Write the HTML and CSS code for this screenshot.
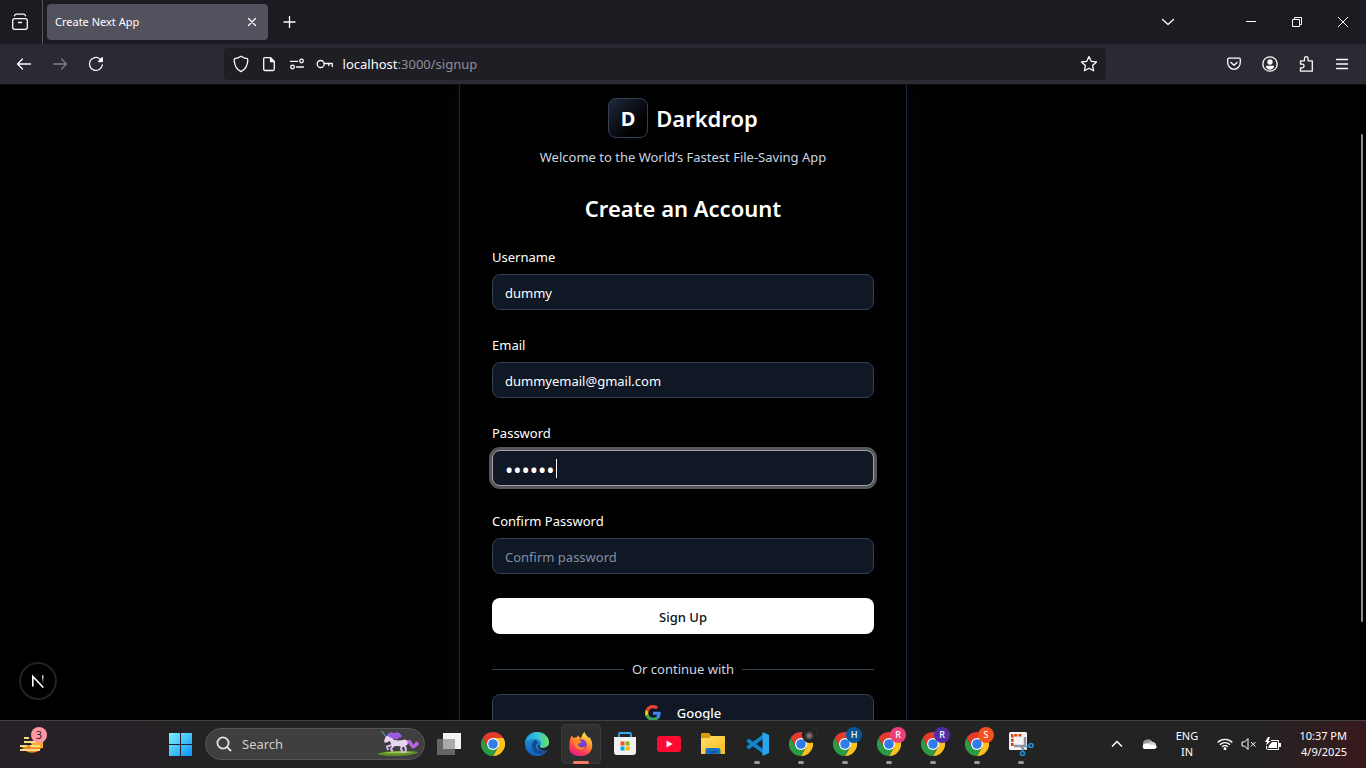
FILE: index.html
```html
<!DOCTYPE html>
<html lang="en">
<head>
<meta charset="utf-8">
<title>Create Next App</title>
<link rel="stylesheet" href="styles.css">
</head>
<body>
<svg class="defs" aria-hidden="true">
  <defs>
    <linearGradient id="win" x1="0" y1="0" x2="1" y2="1"><stop offset="0" stop-color="#7ff0fb"/><stop offset="1" stop-color="#0a93fb"/></linearGradient>
    <linearGradient id="edgeA" x1="0" y1="0" x2="1" y2="0"><stop offset="0" stop-color="#1b9de2"/><stop offset=".5" stop-color="#35c1d6"/><stop offset="1" stop-color="#66e35c"/></linearGradient>
    <linearGradient id="edgeB" x1="0" y1="0" x2="0" y2="1"><stop offset="0" stop-color="#1a9de0"/><stop offset="1" stop-color="#1261c0"/></linearGradient>
    <linearGradient id="fox" x1=".8" y1="0" x2=".3" y2="1"><stop offset="0" stop-color="#fff14f"/><stop offset=".4" stop-color="#ff9a28"/><stop offset=".75" stop-color="#ff3d50"/><stop offset="1" stop-color="#e5208b"/></linearGradient>
    <linearGradient id="folder" x1="0" y1="0" x2="1" y2="1"><stop offset="0" stop-color="#ffdf70"/><stop offset="1" stop-color="#fbbc17"/></linearGradient>
    <linearGradient id="fade" x1="0" y1="0" x2="0" y2="1"><stop offset="0" stop-color="#fff"/><stop offset="1" stop-color="#fff" stop-opacity="0"/></linearGradient>
    <symbol id="chrome" viewBox="0 0 48 48">
      <path fill="#e33b2e" d="M3.2 12A24 24 0 0 1 44.8 12H24L13.6 30Z"/>
      <path fill="#fcc31e" d="M44.8 12A24 24 0 0 1 24 48L34.4 30 24 12Z"/>
      <path fill="#2c9b46" d="M3.2 12A24 24 0 0 0 24 48L34.4 30H13.6Z"/>
      <circle cx="24" cy="24" r="12" fill="#fff"/><circle cx="24" cy="24" r="9.6" fill="#2f7de9"/>
    </symbol>
  </defs>
</svg>

<div class="screen">
  <header class="browser">
    <div class="tabstrip">
      <button class="tool firefox-view" aria-label="Firefox View"><svg width="18" height="18" viewBox="0 0 18 18" class="line"><path d="M3.500 2.800Q4 1.200 5.500 1.200H12.500Q14 1.200 14.500 2.800"/><rect x="1.700" y="5.700" width="14.600" height="10.600" rx="2"/><path d="M7.500 9.500h3"/></svg></button>
      <div class="tab">
        <span>Create Next App</span>
        <button class="tab-close" aria-label="Close tab"><svg width="16" height="16" viewBox="0 0 16 16" class="line"><path d="M4.500 4.500l7 7M11.500 4.500l-7 7"/></svg></button>
      </div>
      <button class="tool new-tab" aria-label="New tab"><svg width="16" height="16" viewBox="0 0 16 16" class="line"><path d="M7.500 2.500v11M2 8h11"/></svg></button>
      <button class="tool list-tabs" aria-label="List all tabs"><svg width="16" height="16" viewBox="0 0 16 16" class="line"><path d="M2.500 5.500L8 10.500l5.500-5"/></svg></button>
      <div class="window-controls">
        <button aria-label="Minimize"><svg width="10" height="10" viewBox="0 0 10 10"><path stroke="#fff" d="M0 4.500h10"/></svg></button>
        <button aria-label="Restore"><svg width="10" height="10" viewBox="0 0 10 10" fill="none" stroke="#fff"><path d="M.5 2.500h7v7h-7zM2.500 2.500v-2h7v7h-2"/></svg></button>
        <button aria-label="Close"><svg width="10" height="10" viewBox="0 0 10 10"><path stroke="#fff" d="M0 0l10 10M10 0L0 10"/></svg></button>
      </div>
    </div>
    <div class="toolbar">
      <button class="tool" aria-label="Back"><svg width="16" height="16" viewBox="0 0 16 16" class="line"><path d="M14.500 8H1.500M6.500 3L1.500 8l5 5"/></svg></button>
      <button class="tool dim" aria-label="Forward"><svg width="16" height="16" viewBox="0 0 16 16" class="line"><path d="M1.500 8h13M9.500 3l5 5-5 5"/></svg></button>
      <button class="tool" aria-label="Reload"><svg width="16" height="16" viewBox="0 0 16 16" class="line"><path d="M14.300 9A6.500 6.500 0 1 1 12 2.900L13.500 4.500"/><path d="M14.300 1.800v3.700h-3.700z" fill="#fbfbfe"/></svg></button>
      <div class="spacer"></div>
      <div class="urlbar">
        <button class="mini" aria-label="Tracking protection"><svg width="16" height="18" viewBox="0 0 16 18" class="line"><path d="M8 1.200C6 2.500 4 3.300 1.800 3.600 1.200 4 1.100 4.500 1.200 5.500 1.500 10.500 3.500 14.500 8 16.600 12.500 14.500 14.500 10.500 14.800 5.500 14.900 4.500 14.800 4 14.200 3.600 12 3.300 10 2.500 8 1.200Z"/></svg></button>
        <button class="mini" aria-label="Site information"><svg width="14" height="16" viewBox="0 0 14 16" class="line"><path d="M2.500 1.700H8.500L12.300 5.500V13Q12.300 14.500 11 14.500H3Q1.700 14.500 1.700 13V3Q1.700 1.700 2.500 1.700Z"/><path d="M8.500 2v3.500H12z" fill="#fbfbfe"/></svg></button>
        <button class="mini" aria-label="Permissions"><svg width="16" height="12" viewBox="0 0 16 12" class="line"><path d="M1.500 3.300h7M7.500 9h7"/><circle cx="12.500" cy="3" r="1.800"/><circle cx="3.500" cy="9" r="1.800"/></svg></button>
        <button class="mini" aria-label="Saved login"><svg width="18" height="10" viewBox="0 0 18 10" class="line"><circle cx="4.700" cy="5" r="3.500"/><path d="M8.200 4.500H16.300V7.500M12.800 4.500V6.500"/></svg></button>
        <div class="address" role="textbox" aria-label="Address" contenteditable="true" spellcheck="false"><span class="host">localhost</span>:3000/signup</div>
        <button class="mini" aria-label="Bookmark"><svg width="18" height="18" viewBox="0 0 18 18" class="line"><path d="M9 1.500l2.200 4.800 5.300.6-3.900 3.600 1 5.300L9 13.200l-4.600 2.600 1-5.300L1.500 6.900l5.300-.6z"/></svg></button>
      </div>
      <div class="spacer"></div>
      <button class="tool" aria-label="Save to Pocket"><svg width="16" height="14" viewBox="0 0 16 14" class="line"><path d="M2.500 1.200h11Q14.300 1.200 14.300 2.500V5.500a6.300 6.800 0 0 1-12.600 0V2.500Q1.700 1.200 2.500 1.200Z"/><path d="M5 5.500L8 8.300 11 5.500"/></svg></button>
      <button class="tool" aria-label="Account"><svg width="16" height="16" viewBox="0 0 16 16" class="line"><circle cx="8" cy="8" r="7.200"/><circle cx="8" cy="6" r="2" fill="#fbfbfe"/><path d="M4.500 10.500h7Q10.500 13 8 13T4.500 10.500Z" fill="#fbfbfe"/></svg></button>
      <button class="tool" aria-label="Extensions"><svg width="16" height="18" viewBox="0 0 16 18" class="line"><path d="M2.500 5.800H6.500V3.500a1.800 1.800 0 0 1 3.600 0V5.800H14.300V16.200H2.500V12.800H4.300a1.800 1.800 0 0 0 0-3.600H2.500Z"/></svg></button>
      <button class="tool" aria-label="Menu"><svg width="14" height="14" viewBox="0 0 14 14" class="line"><path d="M1.500 2.500h11M1.500 7h11M1.500 11.500h11"/></svg></button>
    </div>
  </header>

  <main class="page">
    <section class="card">
      <div class="brand"><span class="logo">D</span><span class="brand-name">Darkdrop</span></div>
      <p class="tagline">Welcome to the World’s Fastest File-Saving App</p>
      <h1>Create an Account</h1>
      <form>
        <div class="field"><label for="username">Username</label><input id="username" type="text" value="dummy" spellcheck="false"></div>
        <div class="field"><label for="email">Email</label><input id="email" type="email" value="dummyemail@gmail.com"></div>
        <div class="field"><label for="password">Password</label><div class="focus-box"><input id="password" class="focused" type="password" value="dummy1"><span class="caret"></span></div></div>
        <div class="field"><label for="confirm">Confirm Password</label><input id="confirm" type="password" placeholder="Confirm password"></div>
        <button class="submit" type="button">Sign Up</button>
      </form>
      <div class="divider"><span>Or continue with</span></div>
      <button class="google" type="button"><svg width="16" height="16" viewBox="0 0 48 48"><path fill="#ea4335" d="M24 9.500c3.540 0 6.710 1.220 9.210 3.600l6.850-6.850C35.900 2.380 30.470 0 24 0 14.620 0 6.510 5.380 2.560 13.220l7.980 6.190C12.430 13.720 17.740 9.500 24 9.500z"/><path fill="#4285f4" d="M46.980 24.550c0-1.570-.15-3.090-.38-4.550H24v9.020h12.940c-.58 2.960-2.260 5.480-4.780 7.180l7.730 6c4.510-4.180 7.090-10.360 7.090-17.650z"/><path fill="#fbbc05" d="M10.530 28.590c-.48-1.450-.76-2.990-.76-4.590s.27-3.140.76-4.590l-7.980-6.190C.92 16.460 0 20.120 0 24c0 3.880.92 7.540 2.560 10.780l7.970-6.190z"/><path fill="#34a853" d="M24 48c6.480 0 11.930-2.130 15.890-5.810l-7.730-6c-2.150 1.450-4.920 2.300-8.160 2.300-6.260 0-11.570-4.220-13.470-9.910l-7.980 6.190C6.510 42.620 14.620 48 24 48z"/></svg>Google</button>
    </section>
    <button class="next-badge" aria-label="Next.js tools"><svg width="14" height="14" viewBox="0 0 14 14" fill="none"><path d="M1.800 12.500V2.500L12.300 13.500" stroke="#fff" stroke-width="1.600"/><path d="M11 1.500h1.500v8H11z" fill="url(#fade)"/></svg></button>
    <div class="scroll-thumb"></div>
  </main>

  <footer class="taskbar">
    <button class="widgets" aria-label="Widgets"><svg width="24" height="20" viewBox="0 0 24 20"><path fill="#f1861f" d="M1 9H23A11.500 11 0 0 1 1 9Z"/><path fill="#f8ab2d" d="M10 5H23V12H13Z"/><path stroke="#f6d98a" stroke-width="2" d="M4 2h5M4 6h12M0 10h7M10 10h10M0 14h20"/></svg><span class="count">3</span></button>
    <nav class="apps" aria-label="Taskbar">
      <button class="app" aria-label="Start"><svg width="24" height="24" viewBox="0 0 24 24"><path fill="url(#win)" d="M1 1h11v11H1zM13 1h11v11H13zM1 13h11v11H1zM13 13h11v11H13z"/></svg></button>
      <div class="search">
        <svg width="16" height="16" viewBox="0 0 16 16" fill="none" stroke="#dde3e8" stroke-width="1.800"><circle cx="7" cy="7" r="5.600"/><path d="M11 11l4 4"/></svg>
        <input type="text" aria-label="Search" placeholder="Search">
        <svg width="44" height="26" viewBox="0 0 44 26">
          <path fill="#5f8f2a" d="M1 23Q8 20 22 20T43 21Q36 25 20 25 6 25 1 23Z"/><path fill="#a4cc48" d="M7 22Q20 19 38 21 26 23 7 22Z"/>
          <path fill="none" stroke="#b566e4" stroke-width="3.600" stroke-linecap="round" d="M31 11.500C35 8 35 17 38 15.500S40 11 41 13"/>
          <path fill="none" stroke="#d7b8ea" stroke-width="2" stroke-linejoin="round" d="M16 14L11 15.500 12 19M18 14l-3 4 1.500 2.500M28 14l2 4-1 4M26 14l-1 4 2 4"/>
          <path fill="#e9d5f2" d="M8 10L10 5 14 4 18 9Q24 10 29 8.500 33 10 31 14L27 16Q20 14 16 16L14 10 9 12Z"/>
          <path fill="#9a5bdf" d="M11 4Q14 0 18 2 23 0 25 4 28 5 23 7 21 10 17 7 13 7 11 4Z"/><path fill="none" stroke="#5f9eaf" stroke-width="1.200" d="M5.500 0l4 5"/>
        </svg>
      </div>
      <button class="app" aria-label="Task view"><svg width="26" height="24" viewBox="0 0 26 24"><path fill="#f2f2f2" d="M7 1H25V17H7Z"/><path fill="#656565" d="M1 7H19V23H1Z"/><path fill="#a9a9a9" d="M7 7H19V17H7Z"/></svg></button>
      <button class="app" aria-label="Chrome"><svg width="24" height="24"><use href="#chrome"/></svg></button>
      <button class="app" aria-label="Edge"><svg width="24" height="24" viewBox="0 0 24 24"><circle cx="12" cy="12" r="12" fill="url(#edgeB)"/><path fill="url(#edgeA)" d="M0 11C1 4 6 0 12 0c7 0 12 5 12 10 0 4-3 6-6 6-3 0-4-1-3-2 2-2 1-7-5-7C5 7 2 8 0 11Z"/><path fill="#164b8f" d="M10 8c-3 2-4 6-2 10 2 4 8 6 13 1-5 1-11-1-10-6l2-2c-1-2-2-3-3-3Z"/><path fill="#232323" d="M15 14c-1 1 0 2 3 2 2 0 4-1 6-3 .5 2-.5 4-2 5.500-4 1-8-.5-9-4 0-1.500 1-2 2-.5Z"/></svg></button>
      <button class="app active" aria-label="Firefox"><svg width="24" height="24" viewBox="0 0 24 24"><path fill="url(#fox)" d="M.5 12C.5 9 1 6 3 3.500l1.500 2.500 3.500-1 1-1.500 2.500 3c1.500-2 1.500-4.500 4-6.500 1 3 3 4 4 6l1-1c6 9 2 19-8.500 19S-.5 19 .5 12Z"/><circle cx="12.500" cy="12.500" r="5.300" fill="#7b3fd0"/><path fill="#ff8a22" d="M5 8.500l4-1.500 4 3c-1 1-4 1-4 3 1 3 6 3 8 1-2 6-13 5-12-5.500Z"/></svg><i class="dot"></i></button>
      <button class="app" aria-label="Microsoft Store"><svg width="24" height="24" viewBox="0 0 24 24"><path fill="none" stroke="#35a9ee" stroke-width="1.800" d="M6 6V2Q6 1 7 1H17Q18 1 18 2V6"/><path fill="#f1f1f1" d="M1 5H23V20Q23 23 20 23H4Q1 23 1 20Z"/><path fill="#f25022" d="M7.500 9.500h4v4h-4z"/><path fill="#7fba00" d="M12.500 9.500h4v4h-4z"/><path fill="#00a4ef" d="M7.500 14.500h4v4h-4z"/><path fill="#ffb900" d="M12.500 14.500h4v4h-4z"/></svg></button>
      <button class="app" aria-label="YouTube"><svg width="24" height="18" viewBox="0 0 24 18"><rect y="1" width="24" height="16" rx="3" fill="#ff0a32"/><path fill="#fff" d="M9.500 5.500v7l6-3.500z"/></svg></button>
      <button class="app" aria-label="File Explorer"><svg width="24" height="24" viewBox="0 0 24 24"><path fill="#d99a0b" d="M0 2Q0 1 1 1H8L10 3.500V7H0Z"/><path fill="url(#folder)" d="M0 6H8L10 4H23Q24 4 24 5V22H0Z"/><path fill="#1673c4" d="M4.500 22V18Q4.500 16 6.500 16H17Q19.500 16 19.500 18V22Z"/><path stroke="#0d5192" stroke-width="1.500" d="M8 20h8"/></svg></button>
      <button class="app" aria-label="Visual Studio Code"><svg width="24" height="24" viewBox="0 0 24 24"><path fill="none" stroke="#1184cf" stroke-width="3.600" stroke-linejoin="round" d="M19 20L2.500 8M2.500 16L19 4"/><path fill="#2aa4ee" d="M17.500 0L24 3V21L17.500 24Z"/></svg><i class="dot"></i></button>
      <button class="app" aria-label="Chrome, profile photo"><svg width="24" height="24"><use href="#chrome"/></svg><b class="profile photo"></b><i class="dot"></i></button>
      <button class="app" aria-label="Chrome, profile H"><svg width="24" height="24"><use href="#chrome"/></svg><b class="profile blue">H</b><i class="dot"></i></button>
      <button class="app" aria-label="Chrome, profile R"><svg width="24" height="24"><use href="#chrome"/></svg><b class="profile pink">R</b><i class="dot"></i></button>
      <button class="app" aria-label="Chrome, second profile R"><svg width="24" height="24"><use href="#chrome"/></svg><b class="profile purple">R</b><i class="dot"></i></button>
      <button class="app" aria-label="Chrome, profile S"><svg width="24" height="24"><use href="#chrome"/></svg><b class="profile orange">S</b><i class="dot"></i></button>
      <button class="app" aria-label="Snipping Tool"><svg width="24" height="24" viewBox="0 0 24 24" overflow="visible"><rect width="18" height="18" rx="1.500" fill="#f3f3f5"/><path fill="none" stroke="#d8400e" stroke-width="2.600" stroke-dasharray="3 1.200" d="M3.300 14V3.300H13"/><path fill="none" stroke="#8e979f" stroke-width="2.400" d="M16 5V14H5M12 14L15 18"/><circle cx="13.500" cy="21.500" r="2" fill="none" stroke="#1a93da" stroke-width="1.600"/><circle cx="22" cy="13.500" r="2" fill="none" stroke="#1a93da" stroke-width="1.600"/><path stroke="#1a93da" stroke-width="1.500" d="M14 19l1-2M20 14l-3 1"/></svg><i class="dot"></i></button>
    </nav>
    <div class="tray">
      <button class="tray-item" aria-label="Show hidden icons"><svg width="12" height="8" viewBox="0 0 12 8" fill="none" stroke="#fff" stroke-width="1.500"><path d="M1 6.500L6 1.500l5 5"/></svg></button>
      <button class="tray-item" aria-label="OneDrive"><svg width="16" height="12" viewBox="0 0 16 12"><path fill="#999" d="M2 6a5 4 0 0 1 9-3L12 8H2Z"/><path fill="#cfcfcf" d="M7 5Q12 2 15 6V9H8Z"/><path fill="#fff" d="M3 11a3 3 0 0 1 0-5Q7 4 10 7q5-1 6 2-1 2-3 2Z"/></svg></button>
      <button class="language">ENG<br>IN</button>
      <button class="status" aria-label="Network, sound and battery">
        <svg width="16" height="12" viewBox="0 0 16 12" fill="none" stroke="#fff" stroke-width="1.300"><path d="M.7 4.500a10.300 10.300 0 0 1 14.600 0M2.900 6.700a7.200 7.200 0 0 1 10.200 0M5.100 8.800a4.100 4.100 0 0 1 5.800 0"/><circle cx="8" cy="10.800" r=".8" fill="#fff"/></svg>
        <svg width="16" height="14" viewBox="0 0 16 14" fill="none" stroke="#fff"><path d="M1 5H3.500L7 1.500V12.500L3.500 9H1ZM10 5l4.500 4.500M14.500 5L10 9.500"/></svg>
        <svg width="16" height="14" viewBox="0 0 16 14"><path fill="none" stroke="#fff" d="M6 3.500H13.500V12.500H2.500Q1.500 12.500 1.500 11V9"/><path fill="#fff" d="M3.500 9L7 5h5v6H3.500zM14 6h2v4h-2zM3 0L0 5h2L1 8.500 5.500 4H3.500L5 0Z"/></svg>
      </button>
      <button class="clock">10:37 PM<br>4/9/2025</button>
    </div>
  </footer>
</div>
</body>
</html>
```

FILE: styles.css
```css
* { box-sizing: border-box; }
body {
  margin: 0;
  background: #000;
  color: #fff;
  font: 13px/20px "Noto Sans", "Open Sans", sans-serif;
}
button, input { font: inherit; color: inherit; }
button { border: 0; padding: 0; background: none; }
svg { display: block; flex: none; }
.defs { position: absolute; width: 0; height: 0; }
.line {
  fill: none;
  stroke: #fbfbfe;
  stroke-width: 1.3;
  stroke-linecap: round;
  stroke-linejoin: round;
}
.screen { display: flex; flex-direction: column; height: 100vh; }

/* Browser chrome */
.tabstrip { display: flex; align-items: center; height: 44px; background: #1c1b22; }
.tool { display: grid; place-items: center; flex: none; width: 36px; height: 32px; }
.dim { opacity: .4; }
.firefox-view {
  width: 43px;
  height: 44px;
  padding-right: 2px;
  border-right: 1px solid #55545e;
}
.tab {
  display: flex;
  align-items: center;
  justify-content: space-between;
  width: 221px;
  height: 36px;
  margin-left: 4px;
  padding: 0 8px;
  border-radius: 4px;
  background: #52525e;
  font-size: 11px;
}
.new-tab { margin-left: 4px; }
.list-tabs { margin-left: auto; }
.window-controls { display: flex; margin-left: 42px; }
.window-controls button { display: grid; place-items: center; width: 46px; height: 44px; }
.toolbar {
  display: flex;
  align-items: center;
  height: 41px;
  padding: 0 6px;
  border-bottom: 1px solid #0f0f12;
  background: #2b2a33;
}
.spacer { flex: 1; }
.urlbar {
  display: flex;
  align-items: center;
  flex: 8;
  height: 32px;
  padding: 0 3px;
  border-radius: 4px;
  background: #1f1e25;
}
.mini { display: grid; place-items: center; flex: none; width: 28px; height: 28px; }
.address { flex: 1; padding-left: 4px; color: #8f8f98; outline: 0; line-height: 22px; }
.host { color: #fbfbfe; }

/* Sign-up page */
.page {
  position: relative;
  display: flex;
  justify-content: center;
  flex: 1;
  min-height: 0;
  overflow: hidden;
}
.card {
  display: flex;
  flex-direction: column;
  width: 100%;
  max-width: 448px;
  height: max-content;
  padding: 13px 32px 32px;
  border: 1px solid #1e293b;
  border-top: 0;
  box-shadow: 0 0 24px rgba(30, 50, 75, .2);
}
.brand { display: flex; align-items: center; justify-content: center; gap: 8px; }
.logo {
  display: grid;
  place-items: center;
  width: 40px;
  height: 40px;
  padding-top: 2px;
  border: 1px solid #334155;
  border-radius: 8px;
  background: linear-gradient(135deg, #1e293b, #000 75%);
  font-size: 20px;
  font-weight: 700;
}
.brand-name, h1 { font-size: 22px; line-height: 32px; font-weight: 600; }
.tagline { margin: 8px 0 24px; color: #cbd5e1; line-height: 22px; text-align: center; }
h1 { margin: 0 0 22px; text-align: center; }
form { display: flex; flex-direction: column; gap: 24px; }
.field { display: flex; flex-direction: column; gap: 6px; }
.field label { line-height: 22px; }
.field input {
  width: 100%;
  height: 36px;
  padding: 2px 12px 0;
  border: 1px solid #334155;
  border-radius: 8px;
  outline: 0;
  background: #101725;
}
.field input::placeholder { color: #8290a2; }
.focus-box { position: relative; }
.field .focused { border-color: #a1a1aa; box-shadow: 0 0 0 3px #55555a; font-size: 22px; }
.caret { position: absolute; left: 64px; top: 9px; width: 1px; height: 19px; background: #fff; }
.submit, .google { height: 36px; padding-top: 2px; border-radius: 8px; }
.submit { background: #fff; color: #0b0f19; font-weight: 500; }
.divider { display: flex; align-items: center; gap: 8px; margin: 24px 0 14px; color: #cbd5e1; line-height: 22px; }
.divider::before, .divider::after { content: ""; flex: 1; height: 1px; background: #334155; }
.google {
  display: flex;
  align-items: center;
  justify-content: center;
  gap: 16px;
  border: 1px solid #334155;
  background: #101725;
  font-weight: 500;
}
.next-badge {
  position: absolute;
  left: 19px;
  bottom: 20px;
  display: grid;
  place-items: center;
  width: 38px;
  height: 38px;
  border: 2px solid #232323;
  border-radius: 50%;
  background: #000;
}
.scroll-thumb { position: absolute; top: 49px; right: 3px; width: 2px; height: 488px; background: #8c8c8c; border-radius: 1px; }

/* Taskbar */
.taskbar {
  display: flex;
  align-items: center;
  flex: none;
  height: 48px;
  box-shadow: inset 0 1px #424242;
  background: linear-gradient(90deg, #272127 0, #252126 10%, #232323 16%, #232323 92%, #38191d 100%);
  font-size: 11px;
  line-height: 16px;
}
.widgets { position: relative; width: 158px; padding: 4px 0 0 20px; }
.count {
  position: absolute;
  left: 31px;
  top: -5px;
  width: 16px;
  border-radius: 50%;
  background: #ff98a5;
  color: #222;
}
.apps { display: flex; align-items: center; }
.app { position: relative; display: grid; place-items: center; width: 44px; height: 40px; }
.active::before { content: ""; position: absolute; inset: 0 2px; border: 1px solid #3a3a3a; border-radius: 4px; background: #303030; }
.active svg { position: relative; }
.dot { position: absolute; left: 19px; bottom: 0; width: 6px; height: 3px; border-radius: 2px; background: #9a9a9a; }
.active .dot { left: 14px; width: 16px; background: #f47c62; }
.profile {
  position: absolute;
  left: 23px;
  top: 3px;
  width: 16px;
  height: 16px;
  border-radius: 50%;
  font-size: 9px;
  font-weight: 500;
}
.photo { background: radial-gradient(circle at 45% 55%, #81706d 0 12%, #303030 32%, #1b1b1b 55%, #555 100%); }
.blue { background: #04579b; }
.pink { background: #ec407a; }
.purple { background: #512da8; }
.orange { background: #f4511e; }
.search {
  display: flex;
  align-items: center;
  width: 220px;
  height: 32px;
  margin: 0 2px 0 3px;
  padding: 0 4px 0 10px;
  border: 1px solid #565656;
  border-radius: 16px;
  background: #3f3f3f;
}
.search input { flex: 1; min-width: 0; border: 0; padding: 0 0 0 10px; outline: 0; background: none; font-size: 13px; }
.search input::placeholder { color: #cecece; }
.tray { display: flex; align-items: center; margin-left: auto; padding-right: 19px; }
.tray-item { display: grid; place-items: center; width: 32px; height: 40px; }
.language { width: 44px; text-align: center; }
.status { display: flex; align-items: center; gap: 8px; padding: 0 6px 0 8px; }
.clock { width: 60px; text-align: right; }
```
